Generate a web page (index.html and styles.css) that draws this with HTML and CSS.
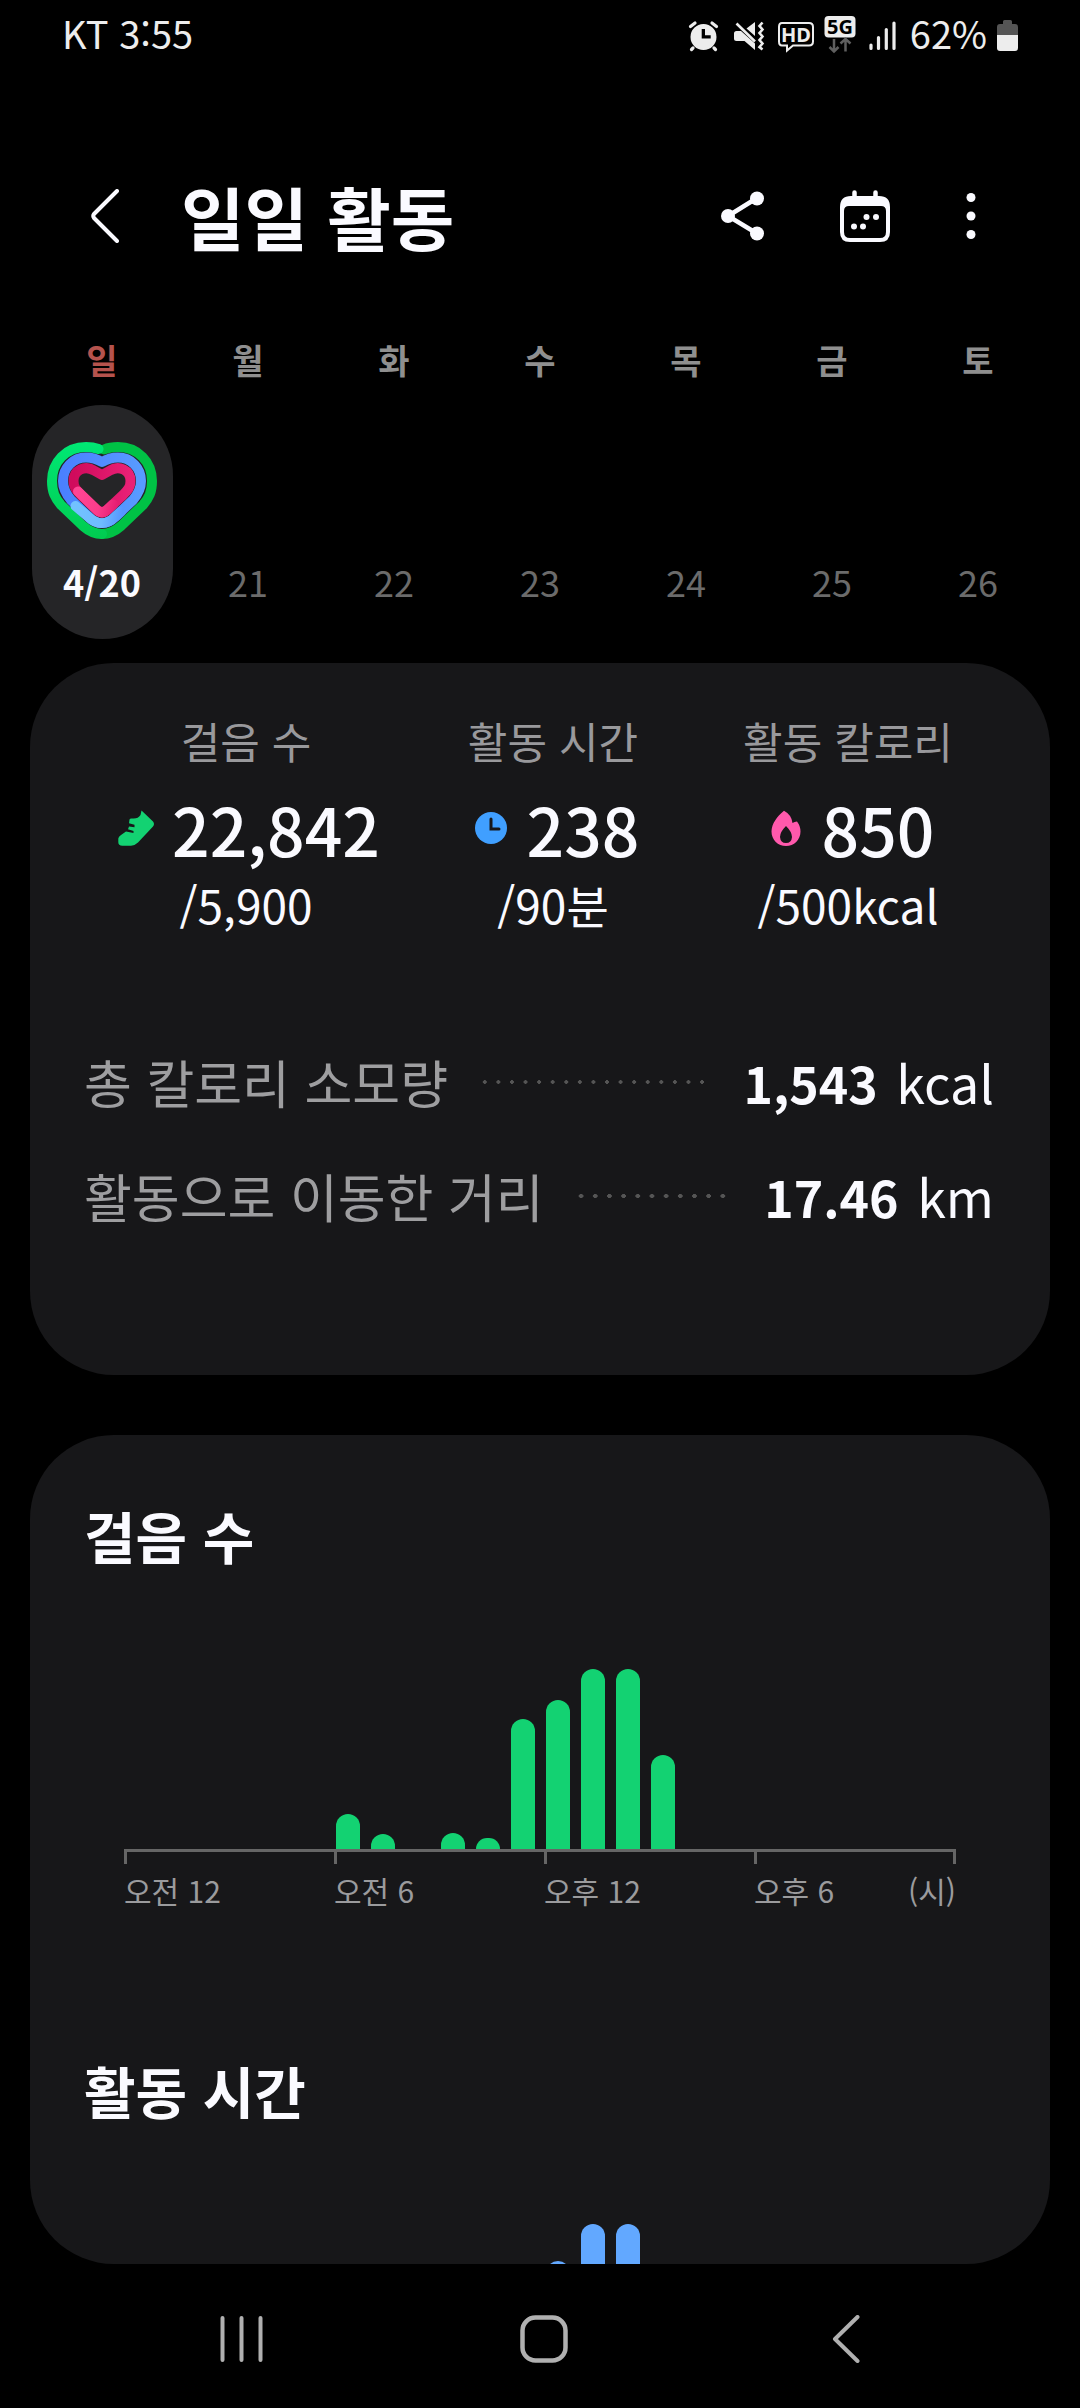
FILE: index.html
```html
<!DOCTYPE html>
<html lang="ko">
<head>
<meta charset="utf-8">
<meta name="viewport" content="width=device-width, initial-scale=1">
<title>일일 활동</title>
<link rel="stylesheet" href="styles.css">
</head>
<body>
<div class="screen">
  <div class="status">
    <span class="status-text">KT 3:55</span>
    <div class="status-icons">
      <svg width="34" height="46" viewBox="690 10 34 46" fill="#ededed" aria-hidden="true">
        <path fill-rule="evenodd" d="M705.500 24a13 13 0 1 1 0 26a13 13 0 1 1 0-26zM703.700 29v9.500h9v-3.200h-5.700V29z"/>
        <path d="M692.500 26.500l4.500-3.500M718.500 26.500l-4.500-3.500M695 48l-1.500 1.500M716 48l1.500 1.500" stroke="#ededed" stroke-width="3.200" stroke-linecap="round"/>
      </svg>
      <svg width="34" height="46" viewBox="734 10 34 46" fill="#ededed" aria-hidden="true">
        <path d="M738.500 31h4.500l14 12.500V50l-10.500-9h-8q-2.500 0-2.500-2.500v-5q0-2.500 2.500-2.500zM757 22v14l-8.500-7.500z"/>
        <path d="M738.500 23.500L757 41.500M764.500 22.500l-3 3.500 3 3.500-3 3.500 3 3.500-3 3.500 3 3.500-3 3.500 3 2.500" fill="none" stroke="#ededed" stroke-width="2.600"/>
      </svg>
      <svg width="38" height="46" viewBox="778 10 38 46" aria-hidden="true">
        <path d="M784 23h27q4 0 4 4v14.500q0 4-4 4h-16l-6 5v-5h-5q-3 0-3-4V27q0-4 3-4z" fill="none" stroke="#ededed" stroke-width="2"/>
        <text x="798" y="41.500" class="badge-text" fill="#ededed">HD</text>
      </svg>
      <svg width="33" height="46" viewBox="826 10 33 46" aria-hidden="true">
        <rect x="826.500" y="16" width="31" height="21.500" rx="4" fill="#ededed"/>
        <text x="842" y="34" class="badge-text" fill="#000">5G</text>
        <path d="M836 39v12M831.500 47l4.500 4.500 4.500-4.500M847.500 51.500V39.500M842.500 43.500l5-4.500 5 4.500" fill="none" stroke="#5f5f5f" stroke-width="2.500"/>
      </svg>
      <svg width="33" height="46" viewBox="869 10 33 46" stroke="#ededed" stroke-width="3.200" stroke-linecap="round" aria-hidden="true">
        <path d="M873 45v3.500M880.500 37.500v11M888.300 29.500v19M896 23v25.500"/>
      </svg>
      <span class="status-text">62%</span>
      <svg width="21" height="46" viewBox="996 10 21 46" aria-hidden="true">
        <path d="M1002 21.500q0-1.500 1.500-1.500h6q1.500 0 1.500 1.500v2.500h3q3 0 3 3v9h-21v-9q0-3 3-3h3z" fill="#555"/>
        <path d="M996 35h21v13q0 3-3 3h-15q-3 0-3-3z" fill="#ededed"/>
      </svg>
    </div>
  </div>

  <header class="appbar">
    <button class="icon-button" aria-label="뒤로">
      <svg width="28" height="54" viewBox="0 0 28 54" fill="none" stroke="#fafaff" stroke-width="4" stroke-linecap="round" stroke-linejoin="round"><path d="M26 2L3 25q-1.500 2 0 4L26 52"/></svg>
    </button>
    <h1 class="appbar-title">일일 활동</h1>
    <div class="appbar-actions">
      <button class="icon-button" aria-label="공유">
        <svg width="43" height="54" viewBox="0 0 43 54" fill="#fafaff"><path d="M36 9L7 27l29 17.500" fill="none" stroke="#fafaff" stroke-width="4.500"/><circle cx="36" cy="9.500" r="7"/><circle cx="7" cy="27" r="7"/><circle cx="36" cy="44.500" r="7"/></svg>
      </button>
      <button class="icon-button" aria-label="달력">
        <svg width="50" height="54" viewBox="0 0 50 54" fill="#fafaff"><path fill-rule="evenodd" d="M11 7h28q11 0 11 11v25q0 10-10 10H10Q0 53 0 43V18Q0 7 11 7zM9 17q-5 0-5 5v21q0 6 6 6h30q6 0 6-6V22q0-5-5-5z"/><path d="M14.500 3.500v6M35.500 3.500v6" stroke="#fafaff" stroke-width="4.500" stroke-linecap="round"/><circle cx="26.500" cy="28" r="3"/><circle cx="36" cy="28" r="3"/><circle cx="14" cy="37.500" r="3"/><circle cx="23" cy="37.500" r="3"/></svg>
      </button>
      <button class="icon-button" aria-label="더보기">
        <svg width="10" height="54" viewBox="0 0 10 54" fill="#fafaff"><circle cx="5" cy="8.500" r="4.500"/><circle cx="5" cy="27" r="4.500"/><circle cx="5" cy="45.500" r="4.500"/></svg>
      </button>
    </div>
  </header>

  <section class="week" aria-label="주간">
    <div class="week-row weekdays">
      <span class="sunday">일</span><span>월</span><span>화</span><span>수</span><span>목</span><span>금</span><span>토</span>
    </div>
    <div class="week-row">
      <button class="day selected">
        <svg width="110" height="97" viewBox="0 0 110 97" fill="none" stroke-width="10" stroke-linejoin="round" stroke-linecap="round" aria-hidden="true">
          <defs>
            <linearGradient id="steps" gradientUnits="userSpaceOnUse" x1="0" y1="0" x2="0" y2="97"><stop offset="0" stop-color="#00e874"/><stop offset="1" stop-color="#00cb50"/></linearGradient>
            <linearGradient id="time" gradientUnits="userSpaceOnUse" x1="16" y1="0" x2="94" y2="0"><stop offset="0" stop-color="#4a80ff"/><stop offset="1" stop-color="#589bff"/></linearGradient>
            <linearGradient id="time-end" gradientUnits="userSpaceOnUse" x1="27" y1="60" x2="76" y2="66"><stop offset="0" stop-color="#72c2ff"/><stop offset=".6" stop-color="#6fbcff"/><stop offset="1" stop-color="#5596ff"/></linearGradient>
            <linearGradient id="kcal" gradientUnits="userSpaceOnUse" x1="27" y1="0" x2="84" y2="0"><stop offset="0" stop-color="#d00b5c"/><stop offset="1" stop-color="#e92176"/></linearGradient>
            <linearGradient id="kcal-end" gradientUnits="userSpaceOnUse" x1="30" y1="50" x2="70" y2="60"><stop offset="0" stop-color="#ff4594"/><stop offset=".6" stop-color="#fb3d8b"/><stop offset="1" stop-color="#e61f73"/></linearGradient>
          </defs>
          <path stroke="#00c245" d="M57 7.500Q63 5 71 5C91 5 105 20 105 39C105 50 102 56 96 63L74 84Q65 92 55 92"/>
          <path stroke="url(#steps)" d="M55 92Q45 92 36 84L14 63C8 56 5 50 5 39C5 20 19 5 39 5Q46 5 51.500 7"/>
          <path stroke="url(#time)" d="M55 20C50 17 46 15.500 39 15.500C26 15.500 16 26 16 39C16 47 19 52 24 58L42 75C50 83 60 83 68 75L86 58C91 52 94 47 94 39C94 26 84 15.500 71 15.500C64 15.500 60 17 55 20z"/>
          <path stroke="url(#time-end)" d="M28.500 64L42 75.500C50 83 60 83 68 75L74 69.500"/>
          <path stroke="url(#kcal)" d="M55 33L47 28.500C38 23 26.500 28 26.500 39C26.500 45 29 48 34 53L50 68Q55 72.500 60 68L76 53C81 48 83.500 45 83.500 39C83.500 28 72 23 63 28.500z"/>
          <path stroke="url(#kcal-end)" d="M31 49.500L50 68Q55 72.500 60 68L66 62.500"/>
        </svg>
        <span>4/20</span>
      </button>
      <button class="day">21</button>
      <button class="day">22</button>
      <button class="day">23</button>
      <button class="day">24</button>
      <button class="day">25</button>
      <button class="day">26</button>
    </div>
  </section>

  <main class="content">
    <section class="card summary">
      <div class="stats">
        <div class="stat">
          <span class="stat-label">걸음 수</span>
          <strong class="stat-value">
            <svg width="36" height="36" viewBox="0 0 36 36" aria-hidden="true"><path d="M23.500.5l11.500 11q2 2.500 0 5L20 32.500q-3 3-7 3.200H5Q0 36 .300 31.500v-3Q.500 26.500 3 25l5-3.500 7.500 1.500v-2l-5.500-1.800 1-2.700 5.500.8v-2.500l-5.500-1.500.500-3.800q.500-1.500 3-1 5.500.500 8-3.500z" fill="#13d272"/></svg>
            22,842
          </strong>
          <span class="stat-goal">/5,900</span>
        </div>
        <div class="stat">
          <span class="stat-label">활동 시간</span>
          <strong class="stat-value">
            <svg width="36" height="36" viewBox="0 0 36 36" aria-hidden="true"><circle cx="18" cy="18" r="16" fill="#409fff"/><path d="M18 9v10h8" fill="none" stroke="#171719" stroke-width="3" stroke-linecap="round"/></svg>
            238
          </strong>
          <span class="stat-goal">/90분</span>
        </div>
        <div class="stat">
          <span class="stat-label">활동 칼로리</span>
          <strong class="stat-value">
            <svg width="36" height="36" viewBox="0 0 36 36" aria-hidden="true"><path fill-rule="evenodd" d="M16 .8q7.500 4 8.500 12.200 2-1.500 4.500-1.500 3.500 4.500 3.500 10C32.500 30 26 36 18 36S3.500 30 3.500 21.500C3.500 14 9 6.500 16 .8zM18 16q-6 6-6 11 .500 6 6 6t6-6q0-5-6-11z" fill="#ff59ac"/></svg>
            850
          </strong>
          <span class="stat-goal">/500kcal</span>
        </div>
      </div>
      <div class="totals">
        <div class="total"><span class="total-label">총 칼로리 소모량</span><i class="leader"></i><span class="total-value"><strong>1,543</strong> kcal</span></div>
        <div class="total"><span class="total-label">활동으로 이동한 거리</span><i class="leader"></i><span class="total-value"><strong>17.46</strong> km</span></div>
      </div>
    </section>

    <section class="card charts">
      <div class="chart">
        <h2 class="chart-title">걸음 수</h2>
        <div class="bars steps">
          <i></i><i></i><i></i><i></i><i></i><i></i>
          <i style="height:35px"></i><i style="height:15px"></i><i></i><i style="height:16px"></i><i style="height:11px"></i><i style="height:130px"></i>
          <i style="height:149px"></i><i style="height:180px"></i><i style="height:180px"></i><i style="height:94px"></i><i></i><i></i>
          <i></i><i></i><i></i><i></i><i></i><i></i>
        </div>
        <div class="axis"><i></i><i></i><i></i><i></i></div>
        <div class="hours"><span>오전 12</span><span>오전 6</span><span>오후 12</span><span class="last">오후 6 <span class="unit">(시)</span></span></div>
      </div>
      <div class="chart">
        <h2 class="chart-title">활동 시간</h2>
        <div class="bars time">
          <i></i><i></i><i></i><i></i><i></i><i></i>
          <i></i><i></i><i></i><i></i><i></i><i></i>
          <i style="height:143px"></i><i style="height:180px"></i><i style="height:180px"></i><i></i><i></i><i></i>
          <i></i><i></i><i></i><i></i><i></i><i></i>
        </div>
      </div>
    </section>
  </main>

  <nav class="navbar">
    <button class="icon-button" aria-label="최근 앱"><svg width="44" height="48" viewBox="0 0 44 48" stroke="#b0b0b0" stroke-width="4" stroke-linecap="round"><path d="M2.500 3v42M21.500 3v42M40.500 3v42"/></svg></button>
    <button class="icon-button" aria-label="홈"><svg width="48" height="48" viewBox="0 0 48 48" fill="none" stroke="#b0b0b0" stroke-width="4.500"><rect x="2.500" y="2.500" width="43" height="43" rx="13"/></svg></button>
    <button class="icon-button" aria-label="뒤로"><svg width="28" height="48" viewBox="0 0 28 48" fill="none" stroke="#b0b0b0" stroke-width="4" stroke-linecap="round" stroke-linejoin="round"><path d="M25.500 2L3 24l22.500 22"/></svg></button>
  </nav>
</div>
</body>
</html>
```
FILE: styles.css
```css
* {
  box-sizing: border-box;
}

body {
  margin: 0;
  background: #000;
  color: #fafaff;
  font-family: "Noto Sans CJK KR", sans-serif;
  font-weight: 400;
}

button {
  padding: 0;
  border: 0;
  background: none;
  color: inherit;
  font: inherit;
}

svg {
  display: block;
  flex: none;
}

i {
  display: block;
}

.screen {
  display: flex;
  flex-direction: column;
  height: 100vh;
}

/* Status bar */

.status {
  display: flex;
  justify-content: space-between;
  align-items: center;
  padding: 0 62px;
  height: 66px;
  flex: none;
}

.status-text {
  color: #ededed;
  font-size: 38px;
  line-height: 46px;
}

.status-icons {
  display: flex;
  align-items: center;
  gap: 10px;
}

.badge-text {
  font-family: "Noto Sans", sans-serif;
  font-size: 20px;
  font-weight: 700;
  text-anchor: middle;
}

/* App bar */

.appbar {
  display: flex;
  align-items: center;
  flex: none;
  height: 100px;
  margin-top: 100px;
  padding: 0 104px 0 91px;
}

.appbar-title {
  margin: 0 0 0 62px;
  font-size: 69px;
  font-weight: 700;
  line-height: 100px;
}

.appbar-actions {
  display: flex;
  gap: 76px;
  margin-left: auto;
}

/* Week strip */

.week {
  flex: none;
  padding: 74px 29px 24px;
}

.week-row {
  display: grid;
  grid-template-columns: repeat(7, 1fr);
  justify-items: center;
}

.weekdays {
  margin-bottom: 25px;
  color: #8f8f8f;
  font-size: 34px;
  font-weight: 700;
  line-height: 40px;
}

.sunday {
  color: #b5534d;
}

.day {
  display: flex;
  flex-direction: column;
  align-items: center;
  justify-content: flex-end;
  gap: 22px;
  width: 141px;
  height: 234px;
  padding-bottom: 38px;
  border-radius: 71px;
  color: #6b6b6b;
  font-size: 36px;
  line-height: 40px;
}

.day.selected {
  background: #252527;
  color: #fafaff;
  font-weight: 700;
}

/* Cards */

.content {
  display: flex;
  flex-direction: column;
  flex: 1;
  gap: 60px;
  min-height: 0;
  padding: 0 30px;
}

.card {
  border-radius: 84px;
  background: #171719;
}

.summary {
  flex: none;
  padding: 49px 56px 122px 54px;
}

.stats {
  display: grid;
  grid-template-columns: 308fr 306fr 284fr;
  padding: 0 4px 0 8px;
}

.stat {
  display: flex;
  flex-direction: column;
  align-items: center;
}

.stat-label {
  color: #99999c;
  font-size: 43px;
  line-height: 56px;
}

.stat-value {
  display: flex;
  align-items: center;
  gap: 18px;
  margin: 20px 0 8px;
  padding-left: 6px;
  font-size: 66px;
  font-weight: 500;
  line-height: 80px;
}

.stat-goal {
  font-size: 46px;
  line-height: 56px;
}

.totals {
  margin-top: 93px;
}

.total {
  display: flex;
  align-items: center;
  font-size: 52px;
  line-height: 114px;
}

.total-label {
  color: #9e9ea0;
}

.leader {
  flex: 1;
  height: 4px;
  margin: 0 34px 0 30px;
  background: radial-gradient(circle, #555 2px, transparent 2px) 0 0 / 14px 4px round;
}

.total-value {
  white-space: pre;
}

.total-value strong {
  margin-right: 4px;
  font-size: 50px;
}

/* Charts */

.charts {
  flex: 1;
  min-height: 0;
  padding-top: 64px;
  overflow: hidden;
}

.chart {
  padding: 0 94px 146px;
}

.chart-title {
  margin: 0 -40px 98px;
  font-size: 56px;
  font-weight: 700;
  line-height: 72px;
}

.bars {
  display: grid;
  grid-template-columns: repeat(24, 1fr);
  column-gap: 11px;
  align-items: end;
  height: 180px;
  padding: 0 1px 0 2px;
}

.bars i {
  border-radius: 12px 12px 0 0;
}

.steps i {
  background: #13d272;
}

.time i {
  background: #62a8ff;
}

.axis,
.hours {
  display: grid;
  grid-template-columns: 210fr 210fr 210fr 202fr;
}

.axis {
  border-top: 3px solid #666;
}

.axis i {
  height: 12px;
  border-left: 3px solid #666;
}

.axis i:last-child {
  border-right: 3px solid #666;
}

.hours {
  margin-top: 8px;
  color: #9b9b9d;
  font-size: 30px;
  line-height: 36px;
}

.last {
  display: flex;
  justify-content: space-between;
}

/* Navigation bar */

.navbar {
  display: grid;
  grid-template-columns: repeat(3, 1fr);
  place-items: center;
  flex: none;
  height: 144px;
  padding: 6px 83px 0 91px;
}
```
